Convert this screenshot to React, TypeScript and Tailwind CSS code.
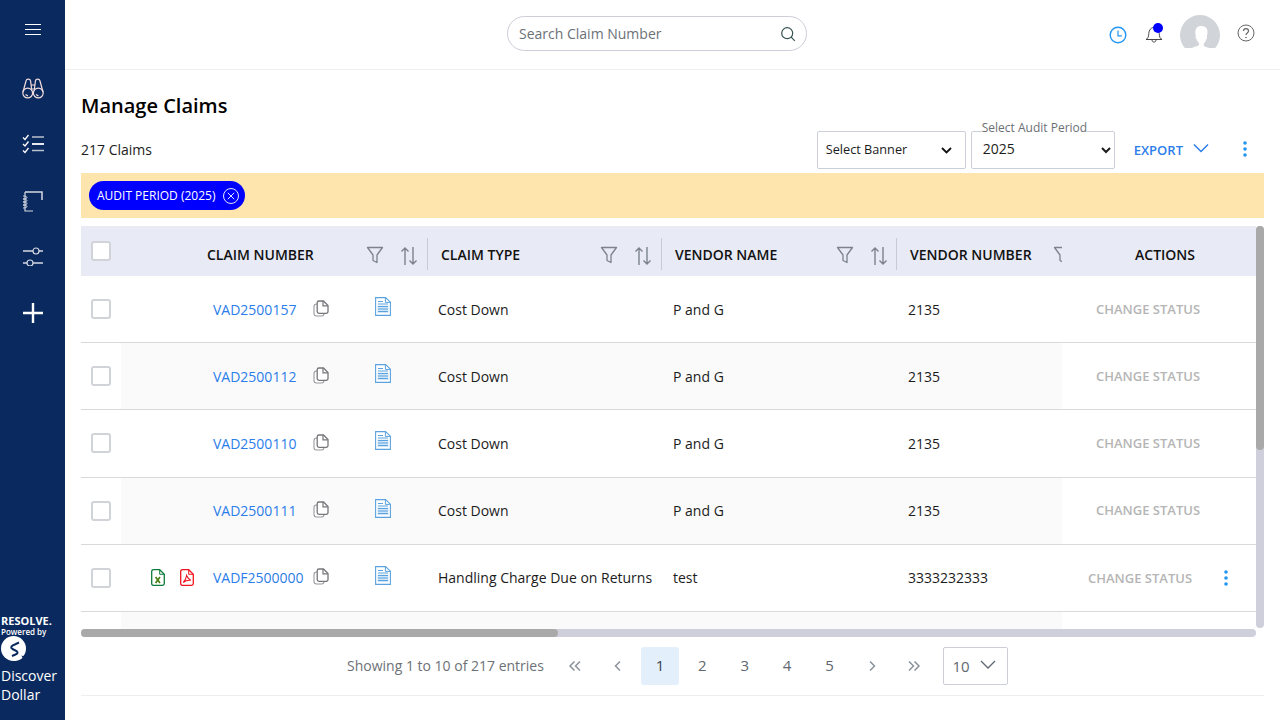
import React from 'react';

const Funnel = () => (
  <svg width="18" height="18" viewBox="0 0 18 18" fill="none" stroke="#7c838c" strokeWidth="1.3" className="shrink-0">
    <path d="M1.5 1.5h15L11 9v7.5l-4-2V9z" strokeLinejoin="round" />
  </svg>
);

const SortArrows = () => (
  <svg width="18" height="20" viewBox="0 0 18 20" fill="none" stroke="#7c838c" strokeWidth="1.4" className="shrink-0">
    <path d="M5 19V2M1.5 5.5 5 2l3.5 3.5M13 1v17M9.5 14.5 13 18l3.5-3.5" />
  </svg>
);

const CopyIcon = () => (
  <svg width="16" height="17" viewBox="0 0 16 17" fill="none" stroke="#77757a" className="shrink-0">
    <rect x="1" y="4" width="10" height="12" rx="2.500" fill="#fff" strokeWidth="1.100" stroke="#9a989c" />
    <path d="M6 1h4.500L15 5.500v6a1.800 1.800 0 0 1-1.800 1.800H6a1.800 1.800 0 0 1-1.800-1.800V2.800A1.800 1.800 0 0 1 6 1z" fill="#fff" strokeWidth="1.300" />
    <path d="M10 1v4.800h4.800" strokeWidth="1.200" />
  </svg>
);

const DocIcon = () => (
  <svg width="16" height="19" viewBox="0 0 16 19" fill="none" className="shrink-0">
    <path d="M.6.6h10l4.8 4.6v13.2H.6z" fill="#fff" stroke="#5ba3e0" strokeWidth="1.1" />
    <path d="M10.4.8v4.600h4.800" stroke="#5ba3e0" strokeWidth="1" />
    <rect x="2.500" y="8.500" width="11" height="7.500" fill="#a9d0f0" opacity="0.55" />
    <path d="M3 4.500h5M3 7h10M3 9.500h10M3 12h10M3 14.500h10" stroke="#5ba3e0" strokeWidth="1.200" />
  </svg>
);

const ExcelIcon = () => (
  <svg width="14" height="17" viewBox="0 0 14 17" fill="none" className="shrink-0">
    <path d="M2.3.7h6.4l4.6 4.6v9.2a1.8 1.8 0 0 1-1.8 1.8H2.3a1.6 1.6 0 0 1-1.6-1.8V2.5A1.7 1.7 0 0 1 2.3.7z" stroke="#0f7b3c" strokeWidth="1.3" />
    <path d="M8.7.9v4.4h4.4" stroke="#0f7b3c" strokeWidth="1" />
    <path d="m4.6 8 4.4 6M9 8l-4.4 6" stroke="#4b7f12" strokeWidth="1.7" />
  </svg>
);

const PdfIcon = () => (
  <svg width="14" height="17" viewBox="0 0 14 17" fill="none" className="shrink-0">
    <path d="M2.3.7h6.4l4.6 4.6v9.2a1.8 1.8 0 0 1-1.8 1.8H2.3a1.6 1.6 0 0 1-1.6-1.8V2.5A1.7 1.7 0 0 1 2.3.7z" stroke="#f0141e" strokeWidth="1.3" />
    <path d="M8.7.9v4.4h4.4" stroke="#f0141e" strokeWidth="1" />
    <path d="M6.6 6.5c-.4 2.6-1.6 5.4-3.4 7 2-1.600 5-2.400 7.600-2.200-1.800-1-3.400-2.800-4.200-4.800z" stroke="#f0141e" strokeWidth="1.100" />
  </svg>
);

const Dots = ({ className = '' }: { className?: string }) => (
  <svg width="4" height="16" viewBox="0 0 4 16" fill="#2196f3" className={className}>
    <circle cx="2" cy="2" r="1.8" />
    <circle cx="2" cy="8" r="1.8" />
    <circle cx="2" cy="14" r="1.8" />
  </svg>
);

const Chevron = ({ d, w = 10 }: { d: string; w?: number }) => (
  <svg width={w} height="12" viewBox={`0 0 ${w} 12`} fill="none" stroke="#8a929b" strokeWidth="1.5">
    <path d={d} />
  </svg>
);

const Sidebar = () => (
  <aside className="w-[65px] h-full shrink-0 bg-[#0a295e] flex flex-col justify-between text-white">
    <div className="flex flex-col items-center">
      <svg width="16" height="12" viewBox="0 0 16 12" stroke="#fff" strokeWidth="1" className="mt-[24px]">
        <path d="M0 .5h16M0 5.5h16M0 10.5h16" />
      </svg>
      <svg width="22" height="22" viewBox="0 0 22 22" fill="none" stroke="#f3dfdf" strokeWidth="1.2" className="mt-[42px]">
        <circle cx="5.7" cy="15" r="4.9" />
        <circle cx="16.3" cy="15" r="4.9" />
        <path d="M1 14 4 3c.5-2.4 4-2.4 4.6 0L9.6 11M21 14 18 3c-.5-2.4-4-2.4-4.6 0L12.4 11M9.6 11h2.8M9 7h4M10.4 15h1.2M3.5 16.5l2.5 1.5M14 16.5l2.5 1.5" />
      </svg>
      <svg width="22" height="20" viewBox="0 0 22 20" fill="none" stroke="#fff" className="mt-[34px]">
        <path d="m1 3.500 2 2 3.500-4.500M1 10l2 2 3.500-4.500M1 16.500l2 2 3.500-4.500" strokeWidth="1.300" />
        <path d="M10 3h12M10 16.500h12" stroke="#b9c0cd" strokeWidth="1.600" />
        <path d="M10 10h12" strokeWidth="1.800" />
      </svg>
      <svg width="20" height="21" viewBox="0 0 20 21" fill="none" stroke="#d5d9e2" strokeWidth="1.200" className="mt-[37px]">
        <path d="M2 1h17v8" strokeWidth="1.500" />
        <path d="M2 1v19h8" />
        <path d="M0 5c2 0 4 .5 4 1.500S2 8 0 8c2 0 4 .5 4 1.500S2 11 0 11c2 0 4 .5 4 1.500S2 14 0 14c2 0 4 .5 4 1.500S2 17 0 17" strokeWidth="1" />
      </svg>
      <svg width="20" height="20" viewBox="0 0 20 20" fill="none" stroke="#d5d9e2" strokeWidth="1.200" className="mt-[34px]">
        <path d="M0 5h10M16 5h4M0 17h4M10 17h10" strokeWidth="1.400" />
        <circle cx="13" cy="5" r="3" />
        <circle cx="7" cy="17" r="3" />
      </svg>
      <svg width="20" height="20" viewBox="0 0 20 20" stroke="#fff" strokeWidth="2.400" className="mt-[37px]">
        <path d="M0 10h20M10 0v20" />
      </svg>
    </div>
    <div className="pl-px pb-[16px] font-['Open_Sans',sans-serif]">
      <div className="text-[11px] leading-[13px] font-bold">RESOLVE.</div>
      <div className="text-[8px] leading-[10px] font-semibold">Powered by</div>
      <svg width="25" height="25" viewBox="0 0 25 25" className="-mt-[1px]">
        <circle cx="12.500" cy="12.500" r="12.500" fill="#fff" />
        <path d="M18 6.500 11.500 9.500Q9 11.500 11.500 13L15.500 15Q18 17 14.500 18.500L11 20" fill="none" stroke="#0a295e" strokeWidth="2" />
        <path d="M20.500 19.500 25 21.500 25 25H15z" fill="#0a295e" />
        <path d="M14 21.500Q18 21.500 20.500 19.500L21.500 22Q18 25 13 25z" fill="#fff" />
      </svg>
      <div className="text-[14px] leading-[19px] mt-[5px]">Discover</div>
      <div className="text-[14px] leading-[19px]">Dollar</div>
    </div>
  </aside>
);

const TopBar = () => (
  <header className="h-[70px] shrink-0 border-b border-[#eeeeee] flex items-start relative">
    <div className="ml-[442px] mt-[16px] w-[300px] h-[35px] rounded-full border border-[#ccced9] flex items-center justify-between pl-[11px] pr-[10px]">
      <span className="text-[14px] text-[#6c7177]">Search Claim Number</span>
      <svg width="16" height="16" viewBox="0 0 16 16" fill="none" stroke="#35524f" strokeWidth="1.200">
        <circle cx="7.200" cy="7.200" r="5.500" />
        <path d="m11.200 11.200 3.600 3.600" />
      </svg>
    </div>
    <svg width="18" height="18" viewBox="0 0 18 18" fill="none" stroke="#2196f3" strokeWidth="1.400" className="ml-[302px] mt-[26px]">
      <circle cx="9" cy="9" r="7.800" />
      <path d="M9 4.500V9.800h3.800" strokeWidth="1.200" />
    </svg>
    <div className="relative ml-[18px] mt-[24px] w-[18px] h-[22px]">
      <svg width="18" height="20" viewBox="0 0 18 20" fill="none" stroke="#333" strokeWidth="0.900">
        <path d="M1 15.500c2-1 2.500-2.500 2.800-6C4 6 6 3.500 9 3.500s5 2.500 5.200 6c.3 3.500.8 5 2.800 6zM7 15.800c0 3 4 3 4 0" />
      </svg>
      <span className="absolute -top-[1px] left-[8px] w-[10px] h-[10px] rounded-full bg-[#0000ff]" />
    </div>
    <svg width="40" height="34" viewBox="0 0 40 34" className="ml-[17px] mt-[15px]">
      <path d="M4.800 33A20 20 0 1 1 35.200 33z" fill="#d1d4d9" />
      <path d="M12 33c2-1.500 5-1.500 7-3 .3-1 0-2-.7-3-1.300-.6-1.500-2-1.700-3-1-.5-1.200-2-.8-3-.8-3-.8-6 .7-8 1.200-1.500 3-2 4.500-2 3 0 5 1 6 3 .8 2 .6 5-.2 7.500.5 1 .2 2.500-.8 3.200-.2 1.300-.6 2.300-1.800 3.300-.6 1-.7 2-.2 3 2 1.500 5 1.500 7 3z" fill="#fff" />
    </svg>
    <svg width="18" height="18" viewBox="0 0 18 18" fill="none" stroke="#666" strokeWidth="1" className="ml-[17px] mt-[24px]">
      <circle cx="9" cy="9" r="8" />
      <path d="M6.500 7c0-3.300 5-3.300 5 0 0 2-2.500 2-2.500 4" strokeWidth="1.200" />
      <circle cx="9" cy="13.500" r=".8" fill="#666" stroke="none" />
    </svg>
  </header>
);

const Toolbar = () => (
  <div className="mt-[11px] h-[38px] flex items-center">
    <span className="-mt-[2px] text-[14px] text-[#1c1c1c]">217 Claims</span>
    <div className="ml-auto w-[149px] h-[38px] bg-white border border-[#ccced9] rounded-[2px] flex items-center justify-between pl-[8px] pr-[13px] text-[12.7px] text-[#1c1c1c]">
      <span>Select Banner</span>
      <svg width="11" height="7" viewBox="0 0 11 7" fill="none" stroke="#111" strokeWidth="1.800">
        <path d="m1 1 4.500 4.500L10 1" />
      </svg>
    </div>
    <div className="relative ml-[5px]">
      <select className="w-[144px] h-[38px] bg-white border border-[#ccced9] rounded-[2px] text-[14px] text-[#1c1c1c] pl-[7px] pb-[3px]">
        <option>2025</option>
      </select>
      <span className="absolute -top-[11px] left-[11px] bg-white text-[12px] leading-[16px] text-[#6c6f74]">Select Audit Period</span>
    </div>
    <span className="ml-[19px] mt-[2px] text-[13px] font-semibold text-[#2b7de9]">EXPORT</span>
    <svg width="16" height="10" viewBox="0 0 16 10" fill="none" stroke="#2b7de9" strokeWidth="1.500" className="ml-[10px] -mt-[4px]">
      <path d="m1 1.500 7 7 7-7" />
    </svg>
    <Dots className="ml-[34px] mr-[17px] -mt-[2px]" />
  </div>
);

const COLUMNS = 'grid grid-cols-[40px_307px_234px_235px_165px_194px]';

const HeaderCell = ({ label, className, gap, more = true }: { label: string; className: string; gap: string; more?: boolean }) => (
  <div className={`flex items-center h-full pt-[7px] overflow-hidden ${className}`}>
    <span className="text-[14px] font-semibold text-[#111] whitespace-nowrap">{label}</span>
    <span className={gap}><Funnel /></span>
    {more && <span className="ml-[16px] mt-[2px]"><SortArrows /></span>}
  </div>
);

const Header = () => (
  <div className={`${COLUMNS} h-[50px] bg-[#e8eaf6]`}>
    <div className="pl-[10px] pt-[15px]">
      <span className="block w-[20px] h-[20px] bg-white border-2 border-[#d0d4d9] rounded-[3px]" />
    </div>
    <div className="relative h-full">
      <HeaderCell label="CLAIM NUMBER" className="pl-[86px]" gap="ml-[52px]" />
      <span className="absolute right-0 top-[12px] h-[32px] w-px bg-[#c9cbd4]" />
    </div>
    <div className="relative h-full">
      <HeaderCell label="CLAIM TYPE" className="pl-[13px]" gap="ml-[80px]" />
      <span className="absolute right-0 top-[12px] h-[32px] w-px bg-[#c9cbd4]" />
    </div>
    <div className="relative h-full">
      <HeaderCell label="VENDOR NAME" className="pl-[13px]" gap="ml-[59px]" />
      <span className="absolute right-0 top-[12px] h-[32px] w-px bg-[#c9cbd4]" />
    </div>
    <HeaderCell label="VENDOR NUMBER" className="pl-[13px]" gap="ml-[21px]" more={false} />
    <div className="flex items-center justify-center pl-[12px] pt-[7px] text-[14px] font-semibold text-[#111]">ACTIONS</div>
  </div>
);

interface Claim {
  id: string;
  type: string;
  vendor: string;
  number: string;
  files?: boolean;
}

const claims: Claim[] = [
  { id: 'VAD2500157', type: 'Cost Down', vendor: 'P and G', number: '2135' },
  { id: 'VAD2500112', type: 'Cost Down', vendor: 'P and G', number: '2135' },
  { id: 'VAD2500110', type: 'Cost Down', vendor: 'P and G', number: '2135' },
  { id: 'VAD2500111', type: 'Cost Down', vendor: 'P and G', number: '2135' },
  { id: 'VADF2500000', type: 'Handling Charge Due on Returns', vendor: 'test', number: '3333232333', files: true },
];

const Row = ({ claim, shaded }: { claim: Claim; shaded: boolean }) => {
  const tint = shaded ? 'bg-[#fafafa]' : 'bg-white';
  return (
    <div className={`${COLUMNS} h-[67.2px] border-b border-[#d9d9d9] text-[14px] text-[#1c1c1c]`}>
      <div className="flex items-center pl-[10px]">
        <span className="block w-[20px] h-[20px] bg-white border-2 border-[#d0d4d9] rounded-[3px]" />
      </div>
      <div className={`flex items-center ${tint}`}>
        <div className="w-[92px] pl-[30px] flex items-center gap-[15px]">
          {claim.files && (
            <>
              <ExcelIcon />
              <PdfIcon />
            </>
          )}
        </div>
        <a className="w-[100px] text-[#2b7de9] whitespace-nowrap">{claim.id}</a>
        <div className="w-[62px] -mt-[2px]"><CopyIcon /></div>
        <div className="-mt-[5px]"><DocIcon /></div>
      </div>
      <div className={`flex items-center pl-[10px] whitespace-nowrap ${tint}`}>{claim.type}</div>
      <div className={`flex items-center pl-[11px] ${tint}`}>{claim.vendor}</div>
      <div className={`flex items-center pl-[11px] ${tint}`}>{claim.number}</div>
      <div className={`flex items-center pt-[1px] text-[13px] font-semibold text-[#b5b5b5] ${claim.files ? 'pl-[26px]' : 'pl-[34px]'}`}>
        CHANGE STATUS
        {claim.files && <Dots className="ml-[32px] -mt-[1px]" />}
      </div>
    </div>
  );
};

const Table = () => (
  <div className="mt-[8px]">
    <div className="flex h-[403px]">
      <div className="w-[1175px] overflow-hidden">
        <Header />
        {claims.map((claim, i) => (
          <Row key={claim.id} claim={claim} shaded={i % 2 === 1} />
        ))}
        <div className={`${COLUMNS} h-[67px]`}>
          <div />
          <div className="bg-[#fafafa]" />
          <div className="bg-[#fafafa]" />
          <div className="bg-[#fafafa]" />
          <div className="bg-[#fafafa]" />
          <div />
        </div>
      </div>
      <div className="w-[8px] h-[402px] bg-[#cfcfdb] rounded-full">
        <div className="h-[224px] bg-[#a9a9a9] rounded-full" />
      </div>
    </div>
    <div className="w-[1175px] h-[8px] bg-[#cfcfdb] rounded-full">
      <div className="w-[477px] h-full bg-[#a9a9a9] rounded-full" />
    </div>
  </div>
);

const Pager = () => (
  <div className="mt-[10px] h-[49px] pb-[11px] border-b border-[#eeeeee] flex items-center pl-[266px] text-[#5f6770]">
    <span className="w-[207px] text-[14px] text-[#6c7177] whitespace-nowrap">Showing 1 to 10 of 217 entries</span>
    <span className="w-[42.4px] flex justify-center"><Chevron w={14} d="M6.500 1.500 2 6l4.500 4.500M12 1.500 7.500 6l4.500 4.500" /></span>
    <span className="w-[42.4px] flex justify-center"><Chevron d="M7 1.500 2.500 6 7 10.500" /></span>
    <span className="w-[38px] h-[38px] mx-[2.200px] rounded-[3px] bg-[#e3f0fb] flex items-center justify-center text-[15px] font-medium text-[#37424d]">1</span>
    {['2', '3', '4', '5'].map(page => (
      <span key={page} className="w-[42.4px] text-center text-[15px] font-medium">{page}</span>
    ))}
    <span className="w-[42.4px] flex justify-center"><Chevron d="M3 1.500 7.500 6 3 10.500" /></span>
    <span className="w-[42.4px] flex justify-center"><Chevron w={14} d="M2 1.500 6.500 6 2 10.500M7.500 1.500 12 6l-4.500 4.500" /></span>
    <div className="ml-[7px] w-[65px] h-[38px] border border-[#ccced9] rounded-[2px] flex items-center justify-between pl-[9px] pr-[11px] text-[15px]">
      <span className="mt-[1px]">10</span>
      <svg width="16" height="10" viewBox="0 0 16 10" fill="none" stroke="#5f6770" strokeWidth="1.300" className="-mt-[2px]">
        <path d="m1 1 7 7 7-7" />
      </svg>
    </div>
  </div>
);

export default function App() {
  return (
    <div className="w-[1280px] h-[720px] overflow-hidden flex bg-white font-['Open_Sans',sans-serif]">
      <Sidebar />
      <main className="flex-1 flex flex-col min-w-0">
        <TopBar />
        <div className="px-[16px]">
          <h1 className="mt-[22px] text-[20px] leading-[28px] font-semibold text-black">Manage Claims</h1>
          <Toolbar />
          <div className="mt-[4px] h-[45px] bg-[#fee5ae] flex items-center pl-[8px]">
            <span className="h-[29px] w-[156px] rounded-full bg-[#0000ff] text-white text-[12px] flex items-center pl-[8px] whitespace-nowrap">
              AUDIT PERIOD (2025)
              <svg width="16" height="16" viewBox="0 0 16 16" fill="none" stroke="#fff" strokeWidth="0.900" className="ml-[8px]">
                <circle cx="8" cy="8" r="7.500" />
                <path d="m4.800 4.800 6.400 6.400m0-6.400-6.400 6.400" />
              </svg>
            </span>
          </div>
          <Table />
          <Pager />
        </div>
      </main>
    </div>
  );
}
